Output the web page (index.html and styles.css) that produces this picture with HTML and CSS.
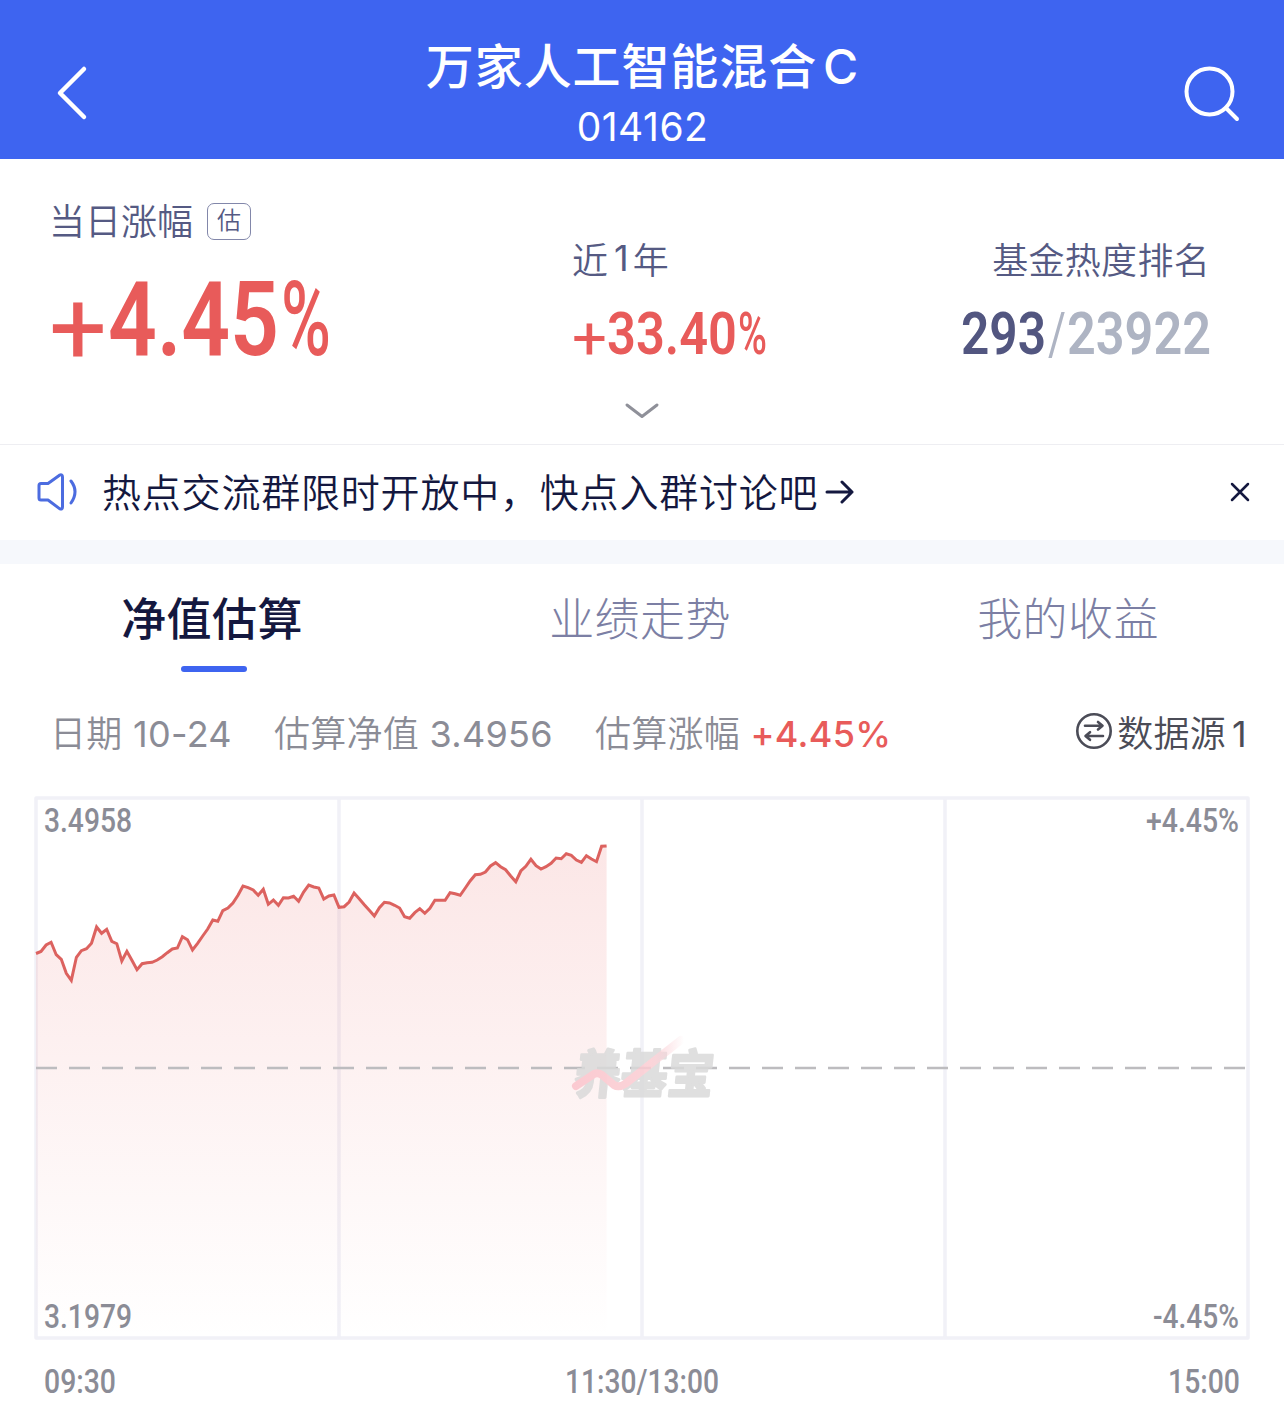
FILE: index.html
```html
<!DOCTYPE html>
<html lang="zh-CN">
<head>
  <meta charset="UTF-8" />
  <title>万家人工智能混合C</title>
  <link rel="stylesheet" href="styles.css">
</head>
<body>
  <header class="header">
    <svg class="back" width="36" height="60" viewBox="0 0 36 60">
      <path d="M31 6 L7 30 L31 54" />
    </svg>
    <div class="title">
      <h1>万家人工智能混合<span class="share">C</span></h1>
      <div class="code">014162</div>
    </div>
    <svg class="search" width="60" height="60" viewBox="0 0 60 60">
      <circle cx="29.5" cy="28.5" r="23" />
      <path d="M46 45 L57 56" />
    </svg>
  </header>

  <section class="stats">
    <div class="stat stat-day">
      <div class="label">当日涨幅<span class="tag">估</span></div>
      <svg class="num up" width="290" height="80" viewBox="0 0 290 80">
        <text font-size="103"><tspan class="sign" x="-1" y="84" textLength="58" lengthAdjust="spacingAndGlyphs">+</tspan><tspan x="58" y="75" textLength="171" lengthAdjust="spacingAndGlyphs">4.45</tspan><tspan class="pct" x="231" y="75" textLength="50" lengthAdjust="spacingAndGlyphs">%</tspan></text>
      </svg>
    </div>
    <div class="stat stat-year">
      <div class="label">近<span class="one">1</span>年</div>
      <svg class="num up" width="200" height="50" viewBox="0 0 200 50">
        <text font-size="60"><tspan class="sign" x="-1" y="51" textLength="35" lengthAdjust="spacingAndGlyphs">+</tspan><tspan x="34" y="46" textLength="130" lengthAdjust="spacingAndGlyphs">33.40</tspan><tspan class="pct" x="165" y="46" textLength="29" lengthAdjust="spacingAndGlyphs">%</tspan></text>
      </svg>
    </div>
    <div class="stat stat-rank">
      <div class="label">基金热度排名</div>
      <svg class="num" width="252" height="50" viewBox="0 0 252 50">
        <text font-size="60"><tspan class="rank" x="1" y="46" textLength="85" lengthAdjust="spacingAndGlyphs">293</tspan><tspan class="total slash" x="88" y="46" textLength="18" lengthAdjust="spacingAndGlyphs">/</tspan><tspan class="total" x="107" y="46" textLength="144" lengthAdjust="spacingAndGlyphs">23922</tspan></text>
      </svg>
    </div>
  </section>

  <div class="more">
    <svg width="36" height="18" viewBox="0 0 36 18"><path d="M3 3 L18 14.500 L33 3" /></svg>
  </div>

  <div class="notice">
    <svg class="horn" width="40" height="38" viewBox="0 0 40 38">
      <path d="M4 10.500 H11 L22.500 2.200 Q25.500 1 25.500 4 V34 Q25.500 37 22.500 35.600 L11 27 H4 Q2 27 2 25 V12.500 Q2 10.500 4 10.500 Z" />
      <path d="M34 8 Q42 18.500 34 30" />
    </svg>
    <div class="notice-text">热点交流群限时开放中，快点入群讨论吧</div>
    <svg class="arrow" width="30" height="24" viewBox="0 0 30 24">
      <path d="M2 12 H27 M17 2 L27 12 L17 22" />
    </svg>
    <svg class="close" width="20" height="20" viewBox="0 0 20 20">
      <path d="M2 2 L18 18 M18 2 L2 18" />
    </svg>
  </div>

  <nav class="tabs">
    <div class="tab active"><span>净值估算</span></div>
    <div class="tab"><span>业绩走势</span></div>
    <div class="tab"><span>我的收益</span></div>
  </nav>

  <div class="info">
    <span class="item">日期 <b>10-24</b></span>
    <span class="item">估算净值 <b>3.4956</b></span>
    <span class="item">估算涨幅 <b class="up">+4.45%</b></span>
    <span class="source">
      <svg width="38" height="38" viewBox="0 0 38 38">
        <circle cx="19" cy="19" r="16.700" />
        <path d="M10 13.700 H27 M23 10 L27.500 13.700 L23 17.500 M28 24 H11 M15 20.200 L10.500 24 L15 27.800" />
      </svg>
      <span>数据源<span class="one">1</span></span>
    </span>
  </div>

  <svg class="chart" width="1284" height="630" viewBox="0 790 1284 630">
    <defs>
      <linearGradient id="fill" x1="0" y1="846" x2="0" y2="1338" gradientUnits="userSpaceOnUse">
        <stop offset="0" stop-color="#e85b5a" stop-opacity="0.150" />
        <stop offset="1" stop-color="#e85b5a" stop-opacity="0" />
      </linearGradient>
      <linearGradient id="trend" x1="574" y1="0" x2="684" y2="0" gradientUnits="userSpaceOnUse">
        <stop offset="0" stop-color="#fbc4cc" />
        <stop offset="0.700" stop-color="#fbcdd3" />
        <stop offset="1" stop-color="#fbcdd3" stop-opacity="0" />
      </linearGradient>
    </defs>
    <path class="grid" d="M36 798 H1248 V1338 H36 Z M339 798 V1338 M642 798 V1338 M945 798 V1338" />
    <polygon id="area" fill="url(#fill)" />
    <path class="middle" d="M36 1068 H1248" />
    <!-- 水印 -->
    <g class="watermark">
      <text transform="translate(573 1093) skewX(-6) scale(1 1.120)" font-size="46" textLength="139">养基宝</text>
      <path d="M576 1086 L594 1074 Q598 1072 602 1075 L614 1085 Q619 1088 625 1084 L681 1040" stroke="url(#trend)" />
    </g>
    <polyline id="line" />
    <g class="axis">
      <text x="44" y="832" textLength="88" lengthAdjust="spacingAndGlyphs">3.4958</text>
      <text x="44" y="1328" textLength="88" lengthAdjust="spacingAndGlyphs">3.1979</text>
      <text x="1146" y="832" textLength="93" lengthAdjust="spacingAndGlyphs">+4.45%</text>
      <text x="1153" y="1328" textLength="86" lengthAdjust="spacingAndGlyphs">-4.45%</text>
      <text x="44" y="1393" textLength="72" lengthAdjust="spacingAndGlyphs">09:30</text>
      <text x="565" y="1393" textLength="154" lengthAdjust="spacingAndGlyphs">11:30/13:00</text>
      <text x="1168" y="1393" textLength="72" lengthAdjust="spacingAndGlyphs">15:00</text>
    </g>
  </svg>

<script>
  // 每分钟一个点，全天 240 分钟
  const points = [
    953.5, 951.5, 945, 942.3, 954.7, 959.3, 973.3, 980.3, 957.3, 950.7,
    948.7, 943.3, 927, 933.3, 929.3, 941.3, 943.7, 961, 951.3, 960.3,
    969.7, 963.7, 962.7, 962.3, 960, 956.7, 952.7, 949, 948, 936.7,
    939.7, 950, 943.3, 936, 929, 920, 921.3, 910.7, 908, 903,
    895.3, 886, 887.7, 890, 895.3, 889.3, 904.3, 900, 905.3, 897.7,
    898, 896.3, 901.3, 892, 885, 887, 888, 899, 896, 895,
    907.3, 906.7, 902, 893, 898.7, 904.7, 910.3, 916, 907.7, 902.3,
    903, 905.3, 908, 916.7, 918.3, 912.7, 908.7, 913.3, 908.3, 900.3,
    900.3, 900.3, 892.7, 893.7, 895.3, 888, 880.7, 874.7, 874.3, 872,
    866, 862.7, 866.7, 869.7, 876, 881.7, 871, 866.3, 859.3, 865.7,
    869, 866.7, 863.3, 858, 858.7, 853.7, 855.3, 860, 862.3, 855.7,
    859, 861.7, 846.3, 846
  ];
  const step = 1212 / 240;
  const line = points.map((y, i) => `${(36 + i * step).toFixed(1)},${y}`);
  const lastX = (36 + (points.length - 1) * step).toFixed(1);
  document.getElementById('line').setAttribute('points', line.join(' '));
  document.getElementById('area').setAttribute('points', `36,1338 ${line.join(' ')} ${lastX},1338`);
</script>
</body>
</html>
```

FILE: styles.css
```css
* {
  box-sizing: border-box;
}
body {
  margin: 0;
  width: 1284px;
  background: #fff;
  font-family: Inter, "Noto Sans CJK SC", sans-serif;
  color: #14183f;
}
svg {
  display: block;
  flex: none;
}
svg path, svg circle, svg polyline {
  fill: none;
  stroke-linecap: round;
  stroke-linejoin: round;
}

.header {
  display: flex;
  justify-content: space-between;
  align-items: flex-start;
  height: 159px;
  padding: 0 44px 0 53px;
  background: #3e64f0;
  color: #fff;
}
.back, .search {
  margin-top: 63px;
  stroke: #fff;
  stroke-width: 4.5;
}
.search {
  stroke-width: 4;
}
.title {
  padding: 38px 0 0 16px;
  text-align: center;
}
.title h1 {
  margin: 0;
  font-size: 48px;
  font-weight: 500;
  line-height: 58px;
  letter-spacing: 0.9px;
}
.share {
  margin-left: 6px;
}
.code {
  font-size: 39px;
  line-height: 62px;
  letter-spacing: 0.5px;
}

.stats {
  display: flex;
  height: 230px;
  padding-left: 50px;
}
.stat-day {
  width: 523px;
  padding-top: 40px;
}
.stat-year {
  width: 387px;
  padding-top: 79px;
}
.stat-rank {
  width: 252px;
  padding-top: 79px;
}
.label {
  display: flex;
  align-items: center;
  height: 44px;
  margin-left: -1px;
  padding-bottom: 5px;
  font-size: 36px;
  font-weight: 350;
  color: #555a83;
}
.stat-rank .label {
  justify-content: flex-end;
  margin-right: 2px;
  letter-spacing: 0.3px;
}
.one {
  padding: 0 4px 0 6px;
  font-weight: 400;
}
.tag {
  width: 44px;
  height: 37px;
  margin: 5px 0 0 14px;
  border: 1.5px solid #8287aa;
  border-radius: 7px;
  font-size: 24px;
  line-height: 34px;
  text-align: center;
}
.num {
  overflow: visible;
  font-family: Roboto, sans-serif;
  font-weight: 600;
}
.stat-day .num {
  margin-top: 37px;
}
.stat-year .num, .stat-rank .num {
  margin-top: 26px;
}
.up {
  color: #e85b5a;
  fill: #e85b5a;
}
.sign {
  font-weight: 400;
}
.pct {
  font-weight: 500;
}
.slash {
  font-weight: 400;
}
.rank {
  fill: #525680;
}
.total {
  fill: #aeb4c3;
}

.more {
  display: flex;
  justify-content: center;
  height: 56px;
  padding-top: 13px;
  border-bottom: 1px solid #eeeef2;
  stroke: #8f9099;
  stroke-width: 3;
}

.notice {
  display: flex;
  align-items: center;
  height: 95px;
  padding: 0 34px 1px 37px;
}
.horn {
  stroke: #4c6ce0;
  stroke-width: 3;
}
.notice-text {
  margin-left: 25px;
  padding-bottom: 5px;
  font-size: 39px;
  font-weight: 350;
  letter-spacing: 0.8px;
}
.arrow {
  margin-left: 7px;
  stroke: #14183f;
  stroke-width: 3;
}
.close {
  margin-left: auto;
  stroke: #14183f;
  stroke-width: 2.5;
}

.tabs {
  display: flex;
  height: 132px;
  border-top: 24px solid #f6f8fc;
}
.tab {
  display: flex;
  flex-direction: column;
  align-items: center;
  flex: 1;
  padding-top: 23px;
  font-size: 45px;
  font-weight: 300;
  line-height: 66px;
  letter-spacing: 0.4px;
  color: #7c7fa4;
}
.tab span {
  margin-right: 4px;
}
.active {
  font-weight: 500;
  color: #14183f;
}
.active::after {
  content: "";
  width: 66px;
  height: 6px;
  margin-top: 13px;
  border-radius: 3px;
  background: #3e64f0;
}

.info {
  display: flex;
  align-items: center;
  height: 118px;
  padding: 0 35px 0 50px;
  font-size: 36px;
  font-weight: 350;
  letter-spacing: 0.3px;
  color: #8b8c96;
}
.item {
  margin-right: 42px;
  white-space: nowrap;
}
.info b {
  font-weight: 400;
}
.info .up {
  font-weight: 500;
}
.source {
  display: flex;
  align-items: center;
  gap: 4px;
  margin-left: auto;
  color: #4b4c57;
}
.source svg {
  stroke: #4b4c57;
  stroke-width: 2.6;
}
.source .one {
  padding-right: 2px;
}

.chart .grid {
  stroke: #f1f1f7;
  stroke-width: 3.5;
}
.chart .middle {
  stroke: #bdbcbf;
  stroke-width: 2.6;
  stroke-dasharray: 21 12;
  stroke-linecap: butt;
}
.watermark {
  opacity: 0.85;
}
.watermark text {
  font-family: "Noto Sans CJK SC", sans-serif;
  font-weight: 700;
  fill: #dadada;
  stroke: #dadada;
  stroke-width: 2.5;
  stroke-linejoin: round;
}
.watermark path {
  stroke-width: 8;
}
#line {
  stroke: #dc625f;
  stroke-width: 3;
  stroke-linejoin: miter;
  stroke-linecap: butt;
}
.axis {
  font-family: Roboto, sans-serif;
  font-size: 33.5px;
  font-weight: 500;
  fill: #8b8c96;
}
```
